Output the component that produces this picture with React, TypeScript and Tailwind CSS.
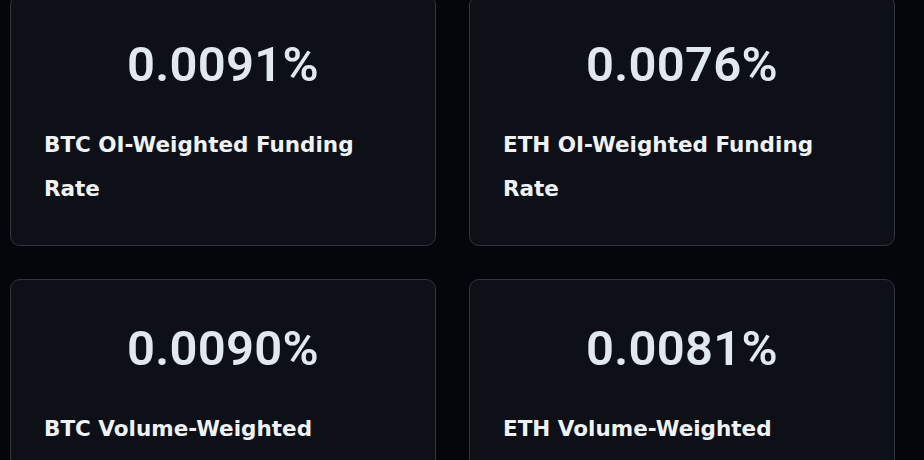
const stats = [
  { value: "0.0091%", label: "BTC OI-Weighted Funding Rate" },
  { value: "0.0076%", label: "ETH OI-Weighted Funding Rate" },
  { value: "0.0090%", label: "BTC Volume-Weighted Funding Rate" },
  { value: "0.0081%", label: "ETH Volume-Weighted Funding Rate" },
];

function StatCard({ value, label }: { value: string; label: string }) {
  return (
    <div className="bg-[#0d1117] border border-[#30363d] rounded-[10px] px-[33px] pt-[45px] pb-[34px]">
      <div
        className="text-center text-[49px] leading-[48px] font-semibold tracking-[0.3px] text-[#e2e8f0]"
        style={{ fontFamily: 'Roboto, sans-serif' }}
      >
        {value}
      </div>
      <p
        className="mt-[34px] text-[21.5px] leading-[44px] font-bold text-[#f0f3f6]"
        style={{ fontFamily: '"DejaVu Sans", sans-serif' }}
      >
        {label}
      </p>
    </div>
  );
}

export default function App() {
  return (
    <div className="h-screen bg-[#05060c] overflow-hidden">
      <div className="-mt-[5px] ml-[10px] w-[885px] grid grid-cols-2 gap-[33px]">
        {stats.map((s) => (
          <StatCard key={s.label} value={s.value} label={s.label} />
        ))}
      </div>
    </div>
  );
}
